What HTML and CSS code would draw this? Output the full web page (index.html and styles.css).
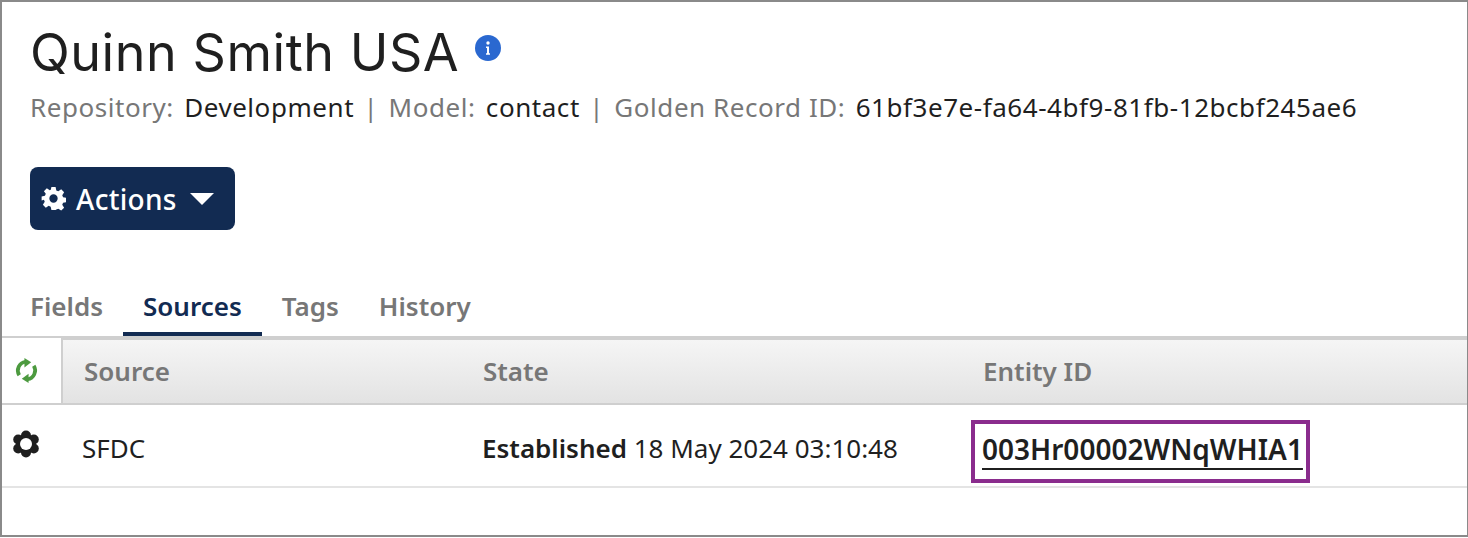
FILE: index.html
```html
<!DOCTYPE html>
<html lang="en">
<head>
    <meta charset="UTF-8">
    <title>Quinn Smith USA</title>
    <link rel="stylesheet" href="styles.css">
</head>
<body>
    <div class="frame">
        <div class="header">
            <div class="title-row">
                <h1>Quinn Smith USA</h1>
                <svg class="info-icon" viewBox="0 0 26 26" width="26" height="26">
                    <circle cx="13" cy="13" r="13" fill="#2a68d0"/>
                    <circle cx="13" cy="8" r="1.700" fill="#fff"/>
                    <path d="M11 11.400h3v6.800h1v1.500h-4v-1.500h1v-5.200h-1z" fill="#fff"/>
                </svg>
            </div>
            <p class="meta">
                <span class="meta-label">Repository:</span> Development
                <span class="sep">|</span>
                <span class="meta-label">Model:</span> contact
                <span class="sep">|</span>
                <span class="meta-label">Golden Record ID:</span> 61bf3e7e-fa64-4bf9-81fb-12bcbf245ae6
            </p>
        </div>

        <button class="actions-btn" type="button">
            <svg viewBox="0 0 24 24" width="25" height="25">
                <path fill="#fff" fill-rule="evenodd" d="M10 1h4l.7 3.200 1.900.8 2.800-1.800 2.800 2.800-1.800 2.800.8 1.900 3.200.7v4l-3.200.7-.8 1.900 1.800 2.800-2.800 2.800-2.800-1.800-1.900.8L14 23h-4l-.7-3.200-1.900-.8-2.800 1.800-2.800-2.800 1.800-2.800-.8-1.900L.6 14v-4l3.200-.7.8-1.900L2.800 5 5.600 2.200l2.800 1.800 1-.4zM12 8a4 4 0 1 0 0 8 4 4 0 0 0 0-8z"/>
            </svg>
            <span>Actions</span>
            <span class="caret"></span>
        </button>

        <div class="tabs">
            <a class="tab">Fields</a>
            <a class="tab active">Sources</a>
            <a class="tab">Tags</a>
            <a class="tab">History</a>
        </div>

        <div class="table">
            <div class="table-head">
                <div class="refresh-cell">
                    <svg viewBox="0 0 24 24" width="25" height="25" fill="none" stroke="#4c9a3f" stroke-width="3.600">
                        <path d="M5 16.500A8.500 8.500 0 0 1 11 3.600"/>
                        <path d="M19 7.500A8.500 8.500 0 0 1 13 20.400"/>
                        <path d="M10 0l6.500 4-6.500 5z" fill="#4c9a3f" stroke="none"/>
                        <path d="M14 24l-6.500-4 6.500-5z" fill="#4c9a3f" stroke="none"/>
                    </svg>
                </div>
                <div class="col col-source">Source</div>
                <div class="col col-state">State</div>
                <div class="col col-entity">Entity ID</div>
            </div>
            <div class="table-row">
                <div class="gear-cell">
                    <svg viewBox="0 0 28 28" width="28" height="28">
                        <g fill="#1f1f1f">
                            <circle cx="14" cy="14" r="10"/>
                            <circle cx="14" cy="5.500" r="5"/>
                            <circle cx="14" cy="22.500" r="5"/>
                            <circle cx="6.200" cy="9.500" r="5"/>
                            <circle cx="21.800" cy="9.500" r="5"/>
                            <circle cx="6.200" cy="18.500" r="5"/>
                            <circle cx="21.800" cy="18.500" r="5"/>
                        </g>
                        <circle cx="14" cy="14" r="6" fill="#fff"/>
                    </svg>
                </div>
                <div class="col col-source">SFDC</div>
                <div class="col col-state"><strong>Established</strong> 18 May 2024 03:10:48</div>
                <div class="col-entity-box">
                    <a class="entity-link">003Hr00002WNqWHIA1</a>
                </div>
            </div>
        </div>
    </div>
</body>
</html>
```

FILE: styles.css
```css
* {
    box-sizing: border-box;
}

body {
    margin: 0;
    font-family: "Noto Sans", sans-serif;
    color: #1f1f1f;
    background-color: white;
}

.frame {
    height: 537px;
    border: 2px solid #8a8a8a;
    border-right-width: 1px;
}

.header {
    padding: 19px 0 0 28px;
}

.title-row {
    display: flex;
    align-items: flex-start;
    gap: 16px;
}

h1 {
    margin: 0;
    font-family: Inter, sans-serif;
    font-size: 52px;
    line-height: 64px;
    font-weight: 400;
    letter-spacing: 0.55px;
}

.info-icon {
    margin-top: 14px;
}

.meta {
    margin: 4px 0 0;
    font-size: 26px;
    line-height: 36px;
    letter-spacing: 0.55px;
}

.meta-label {
    color: #777;
    margin-right: 3px;
}

.sep {
    color: #777;
    margin: 0 3px 0 2px;
}

.actions-btn {
    display: flex;
    align-items: center;
    gap: 10px;
    width: 205px;
    height: 63px;
    margin: 42px 0 0 28px;
    padding: 0 0 0 11px;
    background-color: #122b52;
    color: white;
    border: none;
    border-radius: 8px;
    font-family: "Noto Sans", sans-serif;
    font-size: 28px;
    font-weight: 500;
    letter-spacing: 0.3px;
}

.caret {
    width: 0;
    height: 0;
    margin-left: 3px;
    border-left: 12px solid transparent;
    border-right: 12px solid transparent;
    border-top: 12px solid white;
}

.tabs {
    display: flex;
    margin-top: 59px;
    padding-left: 8px;
    border-bottom: 4px solid #cfcfcf;
    height: 51px;
}

.tab {
    padding: 0 20px;
    height: 47px;
    font-size: 26px;
    line-height: 34px;
    font-weight: 600;
    color: #777;
}

.tab.active {
    color: #122b52;
    border-bottom: 4px solid #122b52;
}

.table-head {
    display: flex;
    align-items: center;
    height: 65px;
    padding-bottom: 2px;
    background: linear-gradient(#f5f5f5, #e3e3e3);
    border-bottom: 2px solid #cfcfcf;
    font-size: 26px;
    font-weight: 600;
    color: #777;
}

.refresh-cell {
    display: flex;
    align-items: center;
    width: 61px;
    height: 65px;
    padding-left: 12px;
    background-color: white;
    border-right: 2px solid #cfcfcf;
}

.col-source {
    width: 420px;
    padding-left: 21px;
}

.col-state {
    width: 500px;
}

.table-row {
    display: flex;
    height: 83px;
    border-bottom: 2px solid #e4e4e4;
    font-size: 26px;
    line-height: 36px;
}

.table-row .col {
    padding-top: 25px;
}

.table-row .col-source {
    width: 420px;
    padding-left: 20px;
}

.table-row .col-state {
    width: 488px;
}

strong {
    font-weight: 600;
}

.gear-cell {
    width: 60px;
    padding: 25px 0 0 10px;
}

.col-entity-box {
    width: 339px;
    height: 63px;
    margin: 15px 0 0 1px;
    padding-left: 7px;
    border: 4px solid #8a2c8d;
    line-height: 50px;
}

.entity-link {
    font-size: 28px;
    font-weight: 600;
    color: #1f1f1f;
    text-decoration: underline;
    text-decoration-thickness: 2px;
    text-decoration-skip-ink: none;
    text-underline-offset: 8px;
}
```
